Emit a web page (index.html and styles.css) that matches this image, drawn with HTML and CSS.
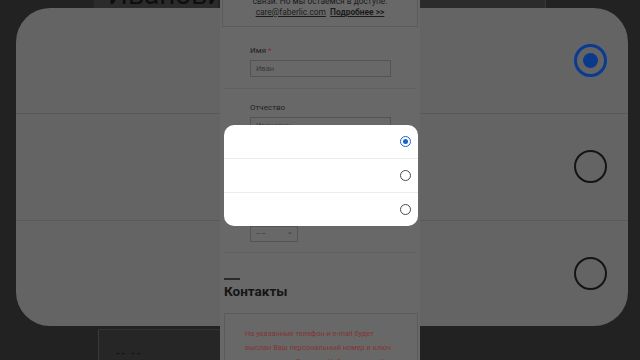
FILE: index.html
```html
<!DOCTYPE html>
<html lang="ru">
<head>
    <meta charset="UTF-8">
    <meta name="viewport" content="width=device-width, initial-scale=1.0">
    <title>Регистрация</title>
    <link rel="stylesheet" href="styles.css">
</head>
<body>
    <div class="screen">
        <!-- blurred, enlarged copy of the picker behind the phone -->
        <div class="backdrop">
            <div class="top-strip">
                <div class="ghost-left"><span>Иванович</span></div>
                <div class="ghost-right"></div>
            </div>
            <div class="card">
                <div class="card-row"><span class="big-radio on"><span class="dot"></span></span></div>
                <div class="card-row"><span class="big-radio"></span></div>
                <div class="card-row"><span class="big-radio"></span></div>
            </div>
            <div class="bottom-strip"><span>-- --</span></div>
        </div>

        <div class="phone">
            <div class="notice">
                <div class="notice-text">
                    связи. Но мы остаемся в доступе.<br>
                    <a class="mail">care@faberlic.com</a>&nbsp;&nbsp;<a class="more">Подробнее &gt;&gt;</a>
                </div>
            </div>

            <div class="section first">
                <div class="label">Имя <span class="req">*</span></div>
                <div class="input">Иван</div>
            </div>

            <div class="section second">
                <div class="label">Отчество</div>
                <div class="input">Иванович</div>
                <div class="label spaced">Дата рождения <span class="req">*</span></div>
                <div class="select">-- --<span class="caret">&#8964;</span></div>
            </div>

            <div class="rule"></div>
            <h2 class="heading">Контакты</h2>
            <div class="info">
                На указанные телефон и e-mail будет<br>
                выслан Ваш персональный номер и ключ<br>
                для доступа к Личному Кабинету на сайт
            </div>

            <div class="picker">
                <div class="picker-row"><span class="radio on"><span class="dot"></span></span></div>
                <div class="picker-row"><span class="radio"></span></div>
                <div class="picker-row"><span class="radio"></span></div>
            </div>
        </div>
    </div>
</body>
</html>
```

FILE: styles.css
```css
body {
    margin: 0;
    background-color: #222222;
    font-family: 'Roboto', 'Noto Sans', sans-serif;
}

.screen {
    position: relative;
    width: 640px;
    height: 360px;
    overflow: hidden;
}

/* backdrop */
.top-strip {
    display: flex;
    height: 8px;
}

.ghost-left {
    margin-left: 94px;
    width: 124px;
    background-color: #2b2b2b;
    overflow: hidden;
}

.ghost-left span {
    display: block;
    margin-top: -19px;
    margin-left: 14px;
    font-size: 28px;
    line-height: 28px;
    color: #0e0e0e;
    white-space: nowrap;
}

.ghost-right {
    margin-left: 202px;
    width: 125px;
    background-color: #2b2b2b;
    border-right: 1px solid #383838;
}

.card {
    margin-left: 16px;
    width: 612px;
    height: 318px;
    background-color: #646464;
    border-radius: 34px;
    display: flex;
    flex-direction: column;
    overflow: hidden;
}

.card-row {
    flex: 1;
    display: flex;
    align-items: center;
    justify-content: flex-end;
    padding-right: 21px;
}

.card-row + .card-row {
    border-top: 1px solid #595959;
}

.big-radio {
    width: 33px;
    height: 33px;
    box-sizing: border-box;
    border: 2.5px solid #141414;
    border-radius: 50%;
    display: flex;
    align-items: center;
    justify-content: center;
}

.big-radio.on {
    border: 3.5px solid #0c3b8e;
    box-shadow: 0 0 0 1px #56667e;
}

.big-radio .dot {
    width: 15px;
    height: 15px;
    border-radius: 50%;
    background-color: #0b3a8d;
}

.bottom-strip {
    margin-top: 3px;
    margin-left: 98px;
    width: 122px;
    height: 40px;
    box-sizing: border-box;
    border-left: 1px solid #3a3a3a;
    border-top: 1px solid #333333;
    background-color: #262626;
    padding: 19px 0 0 17px;
}

.bottom-strip span {
    display: block;
    font-size: 9px;
    line-height: 9px;
    font-weight: 700;
    color: #0e0e0e;
    letter-spacing: 2px;
}

/* phone */
.phone {
    position: absolute;
    left: 220px;
    top: 0;
    width: 200px;
    height: 360px;
    background-color: #686868;
    overflow: hidden;
    color: #1b1b1b;
}

.notice {
    margin: 0 2px;
    height: 26px;
    border: 1px solid #5b5b5b;
    border-top: none;
    text-align: center;
    overflow: hidden;
}

.notice-text {
    margin-top: -4px;
    font-size: 8.4px;
    line-height: 11px;
}

.notice .mail {
    text-decoration: underline;
}

.notice .more {
    font-weight: 700;
    text-decoration: underline;
}

.section {
    margin: 0 4px;
    padding: 0 26px;
    border-bottom: 1px solid #606060;
}

.section.first {
    padding-top: 19px;
    padding-bottom: 11px;
}

.section.second {
    padding-top: 14px;
    padding-bottom: 10px;
}

.label {
    font-size: 8px;
    line-height: 10px;
    color: #1e1e1e;
}

.label.spaced {
    margin-top: 71px;
}

.req {
    color: #8a2a2a;
}

.input {
    margin-top: 4px;
    width: 141px;
    height: 17px;
    box-sizing: border-box;
    border: 1px solid #545454;
    padding-left: 5px;
    font-size: 7.5px;
    line-height: 15px;
    color: #3a3a3a;
}

.select {
    margin-top: 11px;
    width: 48px;
    height: 16px;
    box-sizing: border-box;
    border: 1px solid #545454;
    padding-left: 5px;
    font-size: 7px;
    line-height: 14px;
    color: #333333;
    display: flex;
    justify-content: space-between;
}

.caret {
    padding-right: 4px;
    font-size: 7px;
    line-height: 10px;
}

.rule {
    margin: 25px 0 0 4px;
    width: 16px;
    height: 1.5px;
    background-color: #2a2a2a;
}

.heading {
    margin: 2px 0 0 4px;
    font-size: 13.5px;
    line-height: 18px;
    font-weight: 700;
    color: #151515;
}

.info {
    margin: 13px 2px 0 4px;
    border: 1px solid #5b5b5b;
    padding: 13px 0 0 20px;
    height: 60px;
    font-size: 7.4px;
    line-height: 14px;
    color: #843434;
    white-space: nowrap;
}

/* radio picker dialog */
.picker {
    position: absolute;
    left: 4px;
    top: 125px;
    width: 194px;
    height: 101px;
    background-color: #ffffff;
    border-radius: 10px;
    display: flex;
    flex-direction: column;
    overflow: hidden;
}

.picker-row {
    flex: 1;
    display: flex;
    align-items: center;
    justify-content: flex-end;
    padding-right: 7px;
}

.picker-row + .picker-row {
    border-top: 1px solid #ececec;
}

.radio {
    width: 11px;
    height: 11px;
    box-sizing: border-box;
    border: 1.3px solid #4a4a4a;
    border-radius: 50%;
    display: flex;
    align-items: center;
    justify-content: center;
}

.radio.on {
    border: 1.3px solid #1a62c9;
}

.radio .dot {
    width: 5px;
    height: 5px;
    border-radius: 50%;
    background-color: #1a62c9;
}
```
